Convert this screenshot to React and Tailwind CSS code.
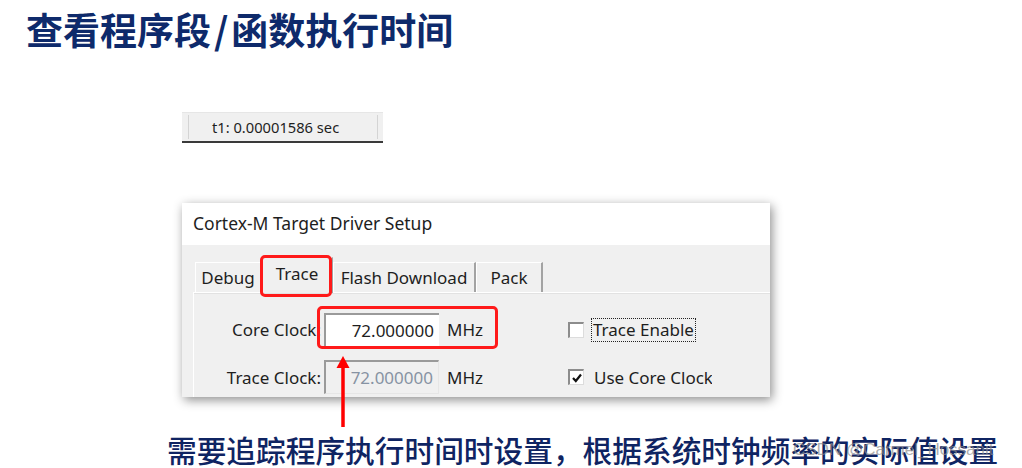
const ui = "font-['Noto_Sans',sans-serif] text-[#1e1e1e]";
const cjk = "font-['Noto_Sans_CJK_SC','Noto_Sans',sans-serif]";

function StatusBar() {
  return (
    <div className={`ml-[182px] mt-[64px] w-[201px] h-[31px] bg-[#f0f0f0] border-t border-[#e6e6e6] border-b-2 border-b-[#3a3a3a] flex items-center ${ui}`}>
      <div className="ml-[6px] w-px h-[24px] bg-[#d4d4d4]" />
      <span className="ml-[23px] text-[14.7px] leading-none flex-1">t1: 0.00001586 sec</span>
      <div className="mr-[5px] w-px h-[24px] bg-[#d4d4d4]" />
    </div>
  );
}

function Tab({ label, width, selected }) {
  if (selected) {
    return (
      <div className={`${width} h-[36px] -mb-[1px] bg-[#f0f0f0] border-t border-l border-white border-r-2 border-r-[#a3a3a3] flex items-start justify-center pt-[5px] text-[17px] leading-[22px] z-10`}>
        {label}
      </div>
    );
  }
  return (
    <div className={`${width} h-[30px] bg-[#f0f0f0] border-t border-l border-white border-r-2 border-r-[#a3a3a3] flex items-center justify-center text-[17px] leading-[22px]`}>
      {label}
    </div>
  );
}

function Checkbox({ checked }) {
  return (
    <div className="w-[16px] h-[16px] bg-white border-t-2 border-l-2 border-[#8c8c8c] border-r border-b border-r-[#dcdcdc] border-b-[#dcdcdc] flex items-center justify-center">
      {checked && (
        <svg width="12" height="12" viewBox="0 0 12 12">
          <path d="M2 6 L4.8 9 L10 2.5" fill="none" stroke="#111" strokeWidth="2.2" />
        </svg>
      )}
    </div>
  );
}

function Dialog() {
  return (
    <div className={`ml-[182px] mt-[60px] w-[588px] h-[194px] flex flex-col shadow-[2px_3px_10px_rgba(0,0,0,0.45)] ${ui}`}>
      <div className="h-[42px] bg-white flex items-center pl-[11px] text-[17.5px] leading-none">
        Cortex-M Target Driver Setup
      </div>
      <div className="flex-1 bg-[#f0f0f0] flex flex-col">
        <div className="relative h-[47px] flex items-end pl-[13px]">
          <Tab label="Debug" width="w-[67px]" />
          <Tab label="Trace" width="w-[71px]" selected />
          <Tab label="Flash Download" width="w-[143px]" />
          <Tab label="Pack" width="w-[67px]" />
          <div className="absolute left-[78px] top-[10px] w-[72px] h-[42px] border-[3px] border-[#ff1a1a] rounded-[5px] z-20" />
        </div>
        <div className="flex-1 ml-[11px] border-t border-l border-white shadow-[inset_0_1px_0_#e2e2e2] flex flex-col pt-[20px] gap-[14px] text-[17px]">
          <div className="relative flex items-center h-[33px]">
            <div className="w-[127px] text-right leading-none whitespace-nowrap">Core Clock:</div>
            <div className="ml-[3px] w-[115px] h-[33px] bg-white border-t-2 border-l-2 border-[#9a9a9a] flex items-center justify-end pr-[5px] leading-none">
              72.000000
            </div>
            <div className="w-[129px] pl-[8px] leading-none">MHz</div>
            <Checkbox />
            <div className="ml-[7px] border border-dotted border-[#222] px-[1px] h-[24px] flex items-center leading-none whitespace-nowrap">
              Trace Enable
            </div>
            <div className="absolute left-[123px] -top-[7px] w-[181px] h-[43px] border-[3px] border-[#ff1a1a] rounded-[5px]" />
          </div>
          <div className="flex items-center h-[34px]">
            <div className="w-[127px] text-right leading-none whitespace-nowrap">Trace Clock:</div>
            <div className="ml-[3px] w-[115px] h-[34px] bg-[#f0f0f0] border-t-2 border-l-2 border-[#9a9a9a] border-r border-b border-r-[#e6e6e6] border-b-[#e6e6e6] flex items-center justify-end pr-[5px] leading-none text-[#8793a3]">
              72.000000
            </div>
            <div className="w-[129px] pl-[8px] leading-none">MHz</div>
            <Checkbox checked />
            <div className="ml-[10px] w-[118px] overflow-hidden whitespace-nowrap leading-none">
              Use Core Clock
            </div>
          </div>
        </div>
      </div>
    </div>
  );
}

export default function App() {
  return (
    <div className="relative w-[1022px] h-[468px] bg-white overflow-hidden">
      <h1 className={`pl-[26px] pt-[11px] text-[37px] leading-[37px] font-bold text-[#0e2a6b] ${cjk}`}>
        查看程序段<span className="px-[3px]">/</span>函数执行时间
      </h1>
      <StatusBar />
      <Dialog />
      <p className={`ml-[167px] mt-[38px] text-[29.7px] leading-[30px] font-medium text-[#0f2462] whitespace-nowrap ${cjk}`}>
        需要追踪程序执行时间时设置，根据系统时钟频率的实际值设置
      </p>

      <svg className="absolute left-[335px] top-[350px]" width="16" height="80" viewBox="0 0 16 80">
        <polygon points="8,6 1.5,18 14.5,18" fill="#ff0000" />
        <line x1="8" y1="17" x2="8" y2="77" stroke="#ff0000" strokeWidth="3.5" />
      </svg>

      <span className="absolute left-[793px] top-[439px] text-[17px] leading-[22px] text-[#8a8a8a]/70 font-['Liberation_Sans',sans-serif] whitespace-nowrap">
        CSDN @Carmel_Hossanit
      </span>
    </div>
  );
}
